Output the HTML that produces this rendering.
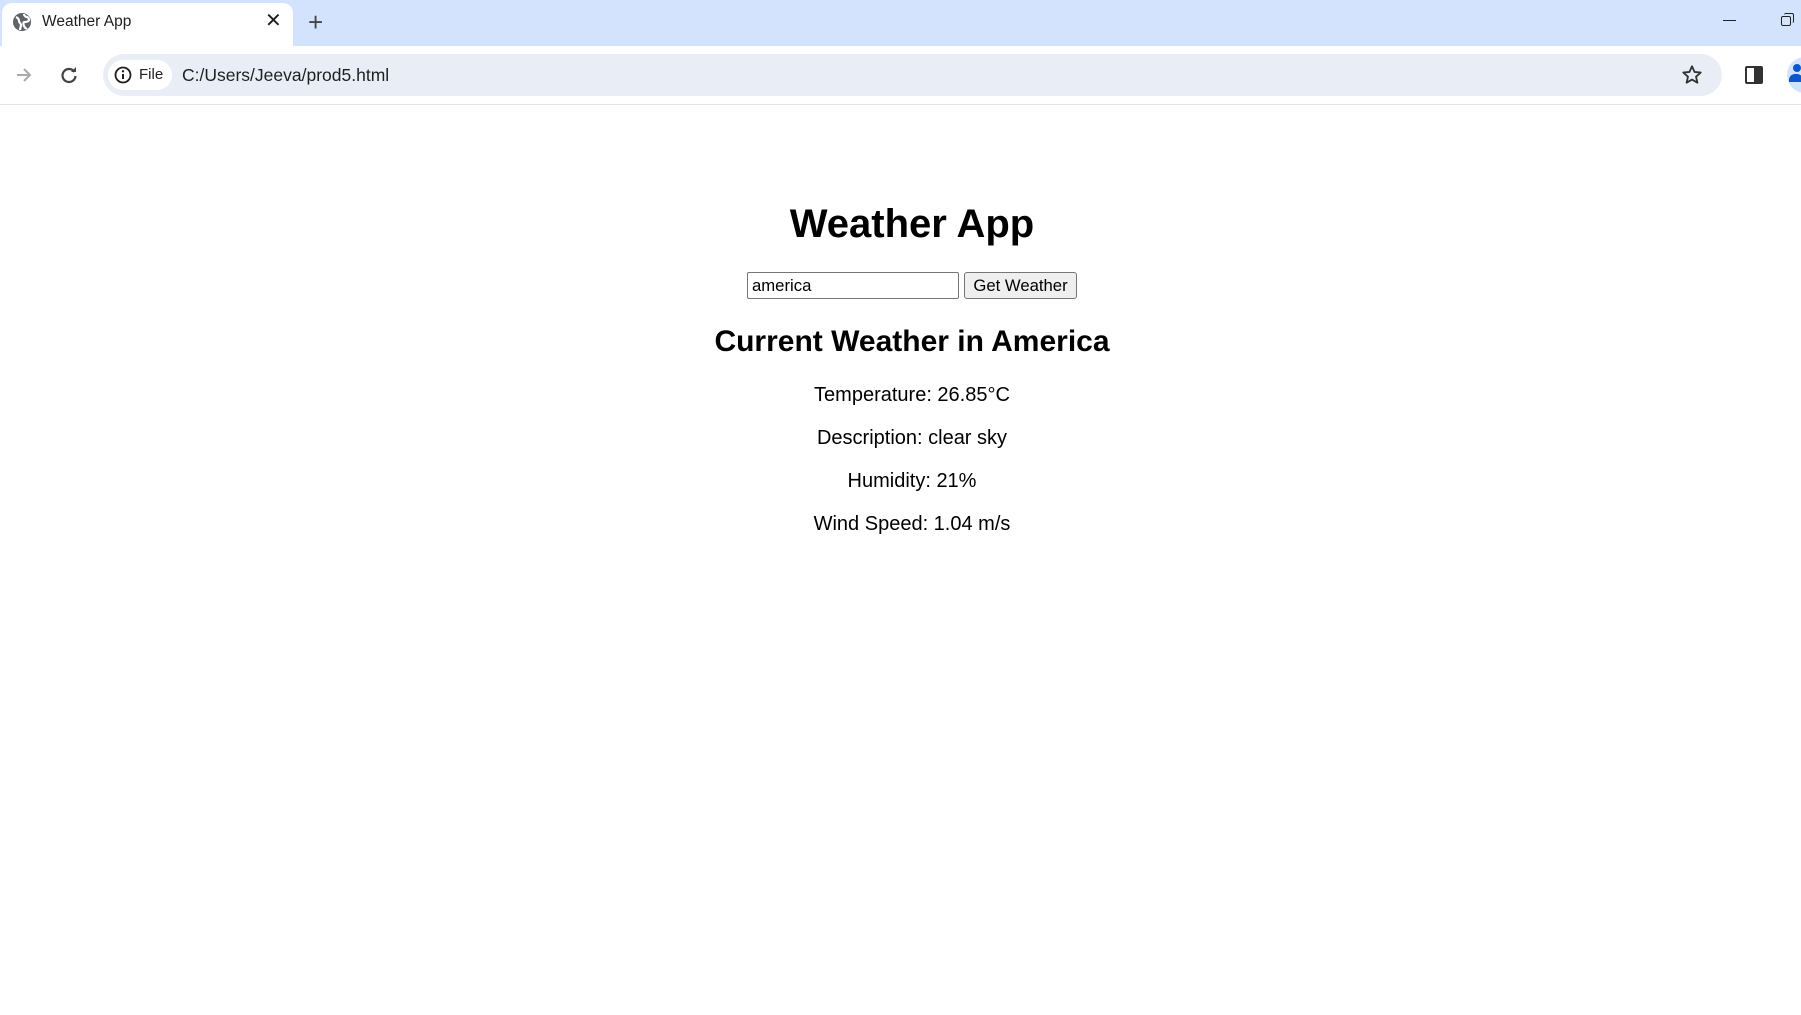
<!DOCTYPE html>
<html><head><meta charset="utf-8"><style>
*{margin:0;padding:0;box-sizing:border-box}
body{width:1801px;height:1015px;overflow:hidden;background:#fff;font-family:"Liberation Sans",Arial,sans-serif;position:relative}
.abs{position:absolute}
.c{position:absolute;left:0;width:1824px;text-align:center;color:#000}
</style></head><body>
<div class="abs" style="left:0;top:0;width:1801px;height:46px;background:#d3e3fd"></div>
<div class="abs" style="left:2px;top:3px;width:291px;height:44px;background:#fff;border-radius:10px 10px 0 0"></div>
<svg class="abs" style="left:12px;top:12px" width="20" height="20" viewBox="0 0 20 20"><circle cx="10" cy="10" r="9" fill="#5f6368"/><path d="M4 5c2 1 3 2 3 4s2 2 2 4-1 3-1 5M12 2c0 2 2 3 3 3s2 2 2 3-2 2-4 2-2 2-1 4 2 3 3 2" stroke="#fff" stroke-width="2.2" fill="none"/></svg>
<div class="abs" style="left:42px;top:13px;font-size:15.5px;color:#1f1f1f">Weather App</div>
<div class="abs" style="left:265px;top:8px;font-size:20px;color:#1f1f1f">✕</div>
<div class="abs" style="left:308px;top:7px;font-size:26px;color:#444;font-weight:300">+</div>
<div class="abs" style="left:1723px;top:20px;width:13px;height:1px;background:#222"></div>
<div class="abs" style="left:1781px;top:16px;width:10px;height:10px;border:1.3px solid #222;border-radius:2px"></div>
<div class="abs" style="left:1784px;top:13px;width:10px;height:10px;border-top:1.3px solid #222;border-right:1.3px solid #222;border-radius:2px"></div>
<div class="abs" style="left:0;top:46px;width:1801px;height:58px;background:#fff"></div>
<svg class="abs" style="left:14px;top:65px" width="20" height="20" viewBox="0 0 20 20"><path d="M3 10h13M10 4l6 6-6 6" stroke="#aaa" stroke-width="2" fill="none"/></svg>
<svg class="abs" style="left:59px;top:65px" width="20" height="20" viewBox="0 0 20 20"><path d="M15.5 7A6.5 6.5 0 1 0 16.5 11" stroke="#444" stroke-width="2.2" fill="none"/><path d="M12 7h5V2z" fill="#444"/></svg>
<div class="abs" style="left:103px;top:54px;width:1619px;height:42px;background:#e9eef6;border-radius:21px"></div>
<div class="abs" style="left:108px;top:60px;width:64px;height:30px;background:#fff;border-radius:15px"></div>
<svg class="abs" style="left:114px;top:66px" width="18" height="18" viewBox="0 0 18 18"><circle cx="9" cy="9" r="7.5" stroke="#1f1f1f" stroke-width="1.8" fill="none"/><path d="M9 8v5" stroke="#1f1f1f" stroke-width="2"/><circle cx="9" cy="5.3" r="1.2" fill="#1f1f1f"/></svg>
<div class="abs" style="left:139px;top:66px;font-size:15px;color:#1f1f1f">File</div>
<div class="abs" style="left:182px;top:65px;font-size:17.5px;color:#1f1f1f">C:/Users/Jeeva/prod5.html</div>
<svg class="abs" style="left:1681px;top:64px" width="22" height="22" viewBox="0 0 24 24"><path d="M12 2.5l2.8 6.2 6.7.6-5.1 4.5 1.5 6.6L12 17l-5.9 3.4 1.5-6.6-5.1-4.5 6.7-.6z" stroke="#333" stroke-width="2" fill="none" stroke-linejoin="round"/></svg>
<div class="abs" style="left:1745px;top:66px;width:18px;height:18px;border:2px solid #333;border-radius:2px;background:linear-gradient(90deg,#fff 50%,#333 50%)"></div>
<div class="abs" style="left:1787px;top:57px;width:36px;height:36px;border-radius:50%;background:#d3e3fd"></div>
<div class="abs" style="left:1793px;top:64px;width:8px;height:8px;border-radius:50%;background:#0b57d0"></div>
<div class="abs" style="left:1789px;top:74px;width:14px;height:8px;border-radius:6px 6px 0 0;background:#0b57d0"></div>
<div class="abs" style="left:0;top:104px;width:1801px;height:1px;background:#e3e3e3"></div>

<div class="c" style="top:201px;font-size:40px;font-weight:bold;line-height:46px">Weather App</div>
<div class="abs" style="left:747px;top:272px;width:212px;height:27px;border:1px solid #767676;border-radius:2px;font-size:16.7px;padding:3px 4px;line-height:19px">america</div>
<div class="abs" style="left:964px;top:272px;width:113px;height:27px;border:1px solid #767676;border-radius:3px;background:#efefef;font-size:16.7px;line-height:25px;text-align:center">Get Weather</div>
<div class="c" style="top:325px;font-size:30px;font-weight:bold;line-height:34px">Current Weather in America</div>
<div class="c" style="top:383px;font-size:20px;line-height:24px">Temperature: 26.85°C</div>
<div class="c" style="top:426px;font-size:20px;line-height:24px">Description: clear sky</div>
<div class="c" style="top:469px;font-size:20px;line-height:24px">Humidity: 21%</div>
<div class="c" style="top:512px;font-size:20px;line-height:24px">Wind Speed: 1.04 m/s</div>
</body></html>
